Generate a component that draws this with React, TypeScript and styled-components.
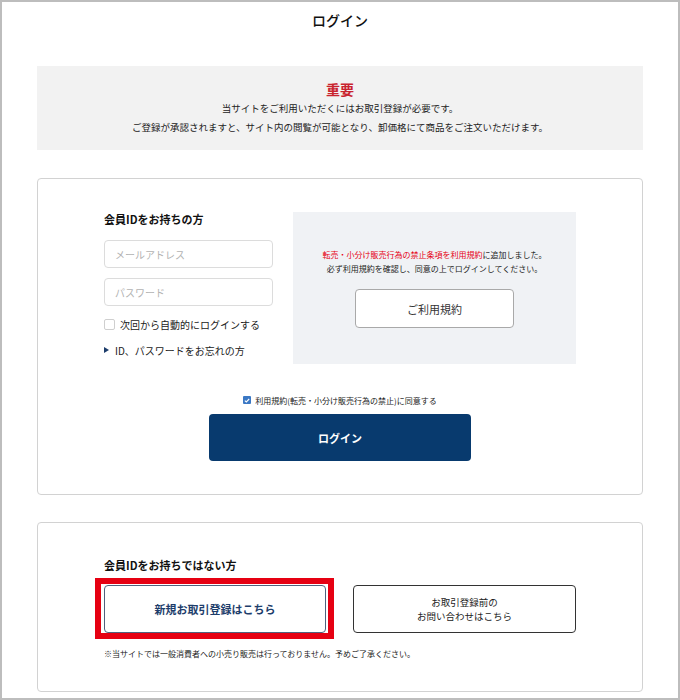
import styled, { createGlobalStyle } from 'styled-components';

const GlobalStyle = createGlobalStyle`
  body {
    margin: 0;
    background: #fff;
    font-family: "Noto Sans CJK JP", "Noto Sans", sans-serif;
    color: #222;
  }
  * {
    box-sizing: border-box;
  }
`;

const Page = styled.div`
  height: 700px;
  overflow: hidden;
  border: 2px solid #bdbdbd;
  padding: 0 35px;
`;

const Title = styled.h1`
  margin: 8px 0 36px;
  font-size: 14px;
  line-height: 20px;
  font-weight: 500;
  text-align: center;
  color: #111;
`;

const Notice = styled.section`
  height: 84px;
  padding: 13px 0;
  background: #f2f2f2;
  text-align: center;

  h2 {
    margin: 0;
    font-size: 14px;
    line-height: 20px;
    font-weight: bold;
    color: #c9242f;
  }

  p {
    margin: 0;
    font-size: 9.5px;
    line-height: 19px;
    color: #222;
  }
`;

const Card = styled.section<{ $gap: number; $pt: number; $pb: number }>`
  margin-top: ${p => p.$gap}px;
  padding: ${p => p.$pt}px 66px ${p => p.$pb}px;
  border: 1px solid #d2d2d2;
  border-radius: 4px;
`;

const TopRow = styled.div`
  display: grid;
  grid-template-columns: 169px 1fr;
  gap: 20px;
`;

const FormCol = styled.div`
  display: flex;
  flex-direction: column;
`;

const Heading = styled.h3`
  margin: 0;
  font-size: 11px;
  line-height: 14px;
  font-weight: bold;
  color: #111;
`;

const Input = styled.input<{ $mt: number }>`
  margin-top: ${p => p.$mt}px;
  height: 28px;
  width: 100%;
  padding: 0 10px;
  border: 1px solid #dcdcdc;
  border-radius: 4px;
  font-family: inherit;
  font-size: 10px;
  outline: none;

  &::placeholder {
    color: #b2b2b2;
  }
`;

const CheckRow = styled.label`
  display: flex;
  align-items: center;
  gap: 5px;
  margin-top: 11px;
  height: 14px;
  font-size: 10px;
  color: #222;
`;

const Box = styled.span`
  width: 11px;
  height: 11px;
  border: 1px solid #cfcfcf;
  border-radius: 2px;
  background: #fff;
`;

const ForgotLink = styled.a`
  display: flex;
  align-items: center;
  gap: 6px;
  margin-top: 12px;
  height: 14px;
  font-size: 10px;
  color: #222;
  text-decoration: none;

  &::before {
    content: '';
    width: 0;
    height: 0;
    border-left: 5px solid #1d3d6b;
    border-top: 3.5px solid transparent;
    border-bottom: 3.5px solid transparent;
  }
`;

const TermsBox = styled.div`
  height: 152px;
  display: flex;
  flex-direction: column;
  align-items: center;
  justify-content: center;
  background: #f0f2f5;
  text-align: center;

  p {
    margin: 0;
    font-size: 8px;
    line-height: 14px;
    color: #222;
  }

  em {
    font-style: normal;
    color: #e60012;
  }
`;

const TermsButton = styled.button`
  margin-top: 13px;
  width: 159px;
  height: 39px;
  border: 1px solid #a9a9a9;
  border-radius: 4px;
  background: #fff;
  font-family: inherit;
  font-size: 11px;
  color: #333;
`;

const AgreeRow = styled.label`
  display: flex;
  justify-content: center;
  align-items: center;
  gap: 4px;
  margin-top: 29px;
  height: 14px;
  font-size: 8px;
  color: #222;
`;

const CheckedBox = styled.span`
  display: flex;
  align-items: center;
  justify-content: center;
  width: 8px;
  height: 8px;
  border-radius: 1px;
  background: #3b78c4;
`;

const LoginButton = styled.button`
  display: block;
  margin: 7px auto 0;
  width: 262px;
  height: 47px;
  border: none;
  border-radius: 4px;
  background: #083a6e;
  font-family: inherit;
  font-size: 11px;
  font-weight: bold;
  color: #fff;
`;

const ButtonRow = styled.div`
  display: grid;
  grid-template-columns: 222px 223px;
  gap: 27px;
  margin-top: 13px;
`;

const ActionButton = styled.button<{ $primary?: boolean }>`
  position: relative;
  height: 48px;
  border: 1px solid ${p => (p.$primary ? '#50617d' : '#333')};
  border-radius: 4px;
  background: #fff;
  font-family: inherit;
  font-size: ${p => (p.$primary ? '11px' : '9.5px')};
  font-weight: ${p => (p.$primary ? 'bold' : 'normal')};
  line-height: 14px;
  color: ${p => (p.$primary ? '#1d3d6b' : '#222')};
`;

const Highlight = styled.span`
  position: absolute;
  top: -8px;
  bottom: -7px;
  left: -10px;
  right: -9px;
  border: 6px solid #e60012;
  pointer-events: none;
`;

const Note = styled.p`
  margin: 15px 0 0;
  font-size: 8px;
  line-height: 12px;
  color: #222;
`;

export default function App() {
  return (
    <>
      <GlobalStyle />
      <Page>
        <Title>ログイン</Title>
        <Notice>
          <h2>重要</h2>
          <p>当サイトをご利用いただくにはお取引登録が必要です。</p>
          <p>ご登録が承認されますと、サイト内の閲覧が可能となり、卸価格にて商品をご注文いただけます。</p>
        </Notice>

        <Card $gap={28} $pt={33} $pb={33}>
          <TopRow>
            <FormCol>
              <Heading>会員IDをお持ちの方</Heading>
              <Input $mt={14} placeholder="メールアドレス" />
              <Input $mt={10} type="password" placeholder="パスワード" />
              <CheckRow>
                <Box />
                次回から自動的にログインする
              </CheckRow>
              <ForgotLink href="#">ID、パスワードをお忘れの方</ForgotLink>
            </FormCol>
            <TermsBox>
              <p>
                <em>転売・小分け販売行為の禁止条項を利用規約</em>に追加しました。
              </p>
              <p>必ず利用規約を確認し、同意の上でログインしてください。</p>
              <TermsButton>ご利用規約</TermsButton>
            </TermsBox>
          </TopRow>
          <AgreeRow>
            <CheckedBox>
              <svg width="6" height="5" viewBox="0 0 6 5">
                <path d="M0.8 2.6 L2.3 4 L5.2 1" fill="none" stroke="#fff" strokeWidth="1.1" />
              </svg>
            </CheckedBox>
            利用規約(転売・小分け販売行為の禁止)に同意する
          </AgreeRow>
          <LoginButton>ログイン</LoginButton>
        </Card>

        <Card $gap={27} $pt={35} $pb={31}>
          <Heading>会員IDをお持ちではない方</Heading>
          <ButtonRow>
            <ActionButton $primary>
              新規お取引登録はこちら
              <Highlight />
            </ActionButton>
            <ActionButton>
              お取引登録前の
              <br />
              お問い合わせはこちら
            </ActionButton>
          </ButtonRow>
          <Note>※当サイトでは一般消費者への小売り販売は行っておりません。予めご了承ください。</Note>
        </Card>
      </Page>
    </>
  );
}
